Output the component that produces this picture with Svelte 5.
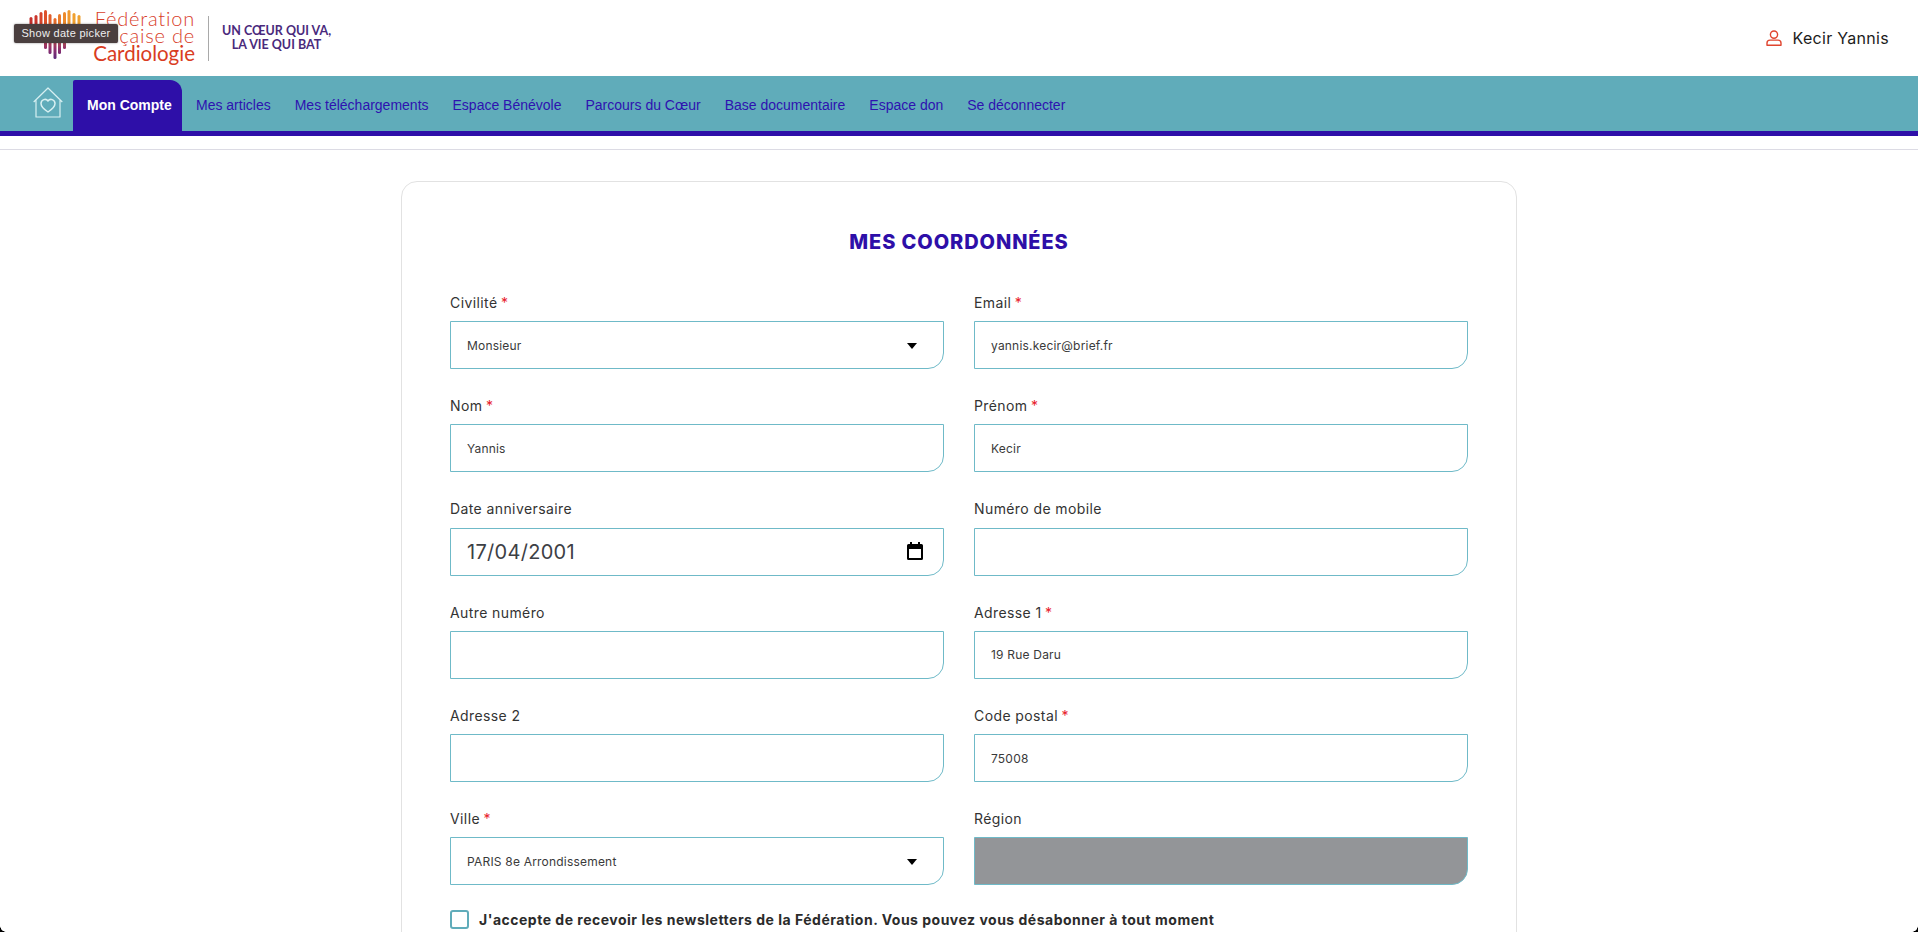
<script lang="ts">
  const navLinks = [
    'Mes articles', 'Mes téléchargements', 'Espace Bénévole', 'Parcours du Cœur',
    'Base documentaire', 'Espace don', 'Se déconnecter',
  ];

  /** Form rows, left to right. kind: text (default), select, date, disabled */
  const fields = [
    { label: 'Civilité', required: true, value: 'Monsieur', kind: 'select' },
    { label: 'Email', required: true, value: 'yannis.kecir@brief.fr' },
    { label: 'Nom', required: true, value: 'Yannis' },
    { label: 'Prénom', required: true, value: 'Kecir' },
    { label: 'Date anniversaire', value: '17/04/2001', kind: 'date' },
    { label: 'Numéro de mobile', value: '' },
    { label: 'Autre numéro', value: '' },
    { label: 'Adresse 1', required: true, value: '19 Rue Daru' },
    { label: 'Adresse 2', value: '' },
    { label: 'Code postal', required: true, value: '75008' },
    { label: 'Ville', required: true, value: 'PARIS 8e Arrondissement', kind: 'select' },
    { label: 'Région', value: '', kind: 'disabled' },
  ];

  /** Heart logo bars: x, top, bottom, top colour */
  const bars = [
    [31, 17, 30, '#c4302c'], [36, 15, 36, '#cb352b'], [41, 12, 43, '#d6432a'],
    [45.500, 10, 49, '#dd502a'], [50, 14, 54, '#e25e2a'], [55, 18, 59, '#e66c2b'],
    [59.500, 14, 54, '#e97a2b'], [64.500, 12, 49, '#ec8a2c'], [69, 10, 43, '#ef982e'],
    [74, 13, 36, '#f0a030'], [79, 15, 30, '#eea02f'],
  ] as const;
</script>

<div class="page">
  <header class="topbar">
    <div class="brand">
      <svg class="heart" width="88" height="70" viewBox="0 0 88 70" aria-hidden="true">
        <defs>
          {#each bars as b, i}
            <linearGradient id="bar{i}" x1="0" y1="10" x2="0" y2="60" gradientUnits="userSpaceOnUse">
              <stop offset="0.4" stop-color={b[3]} />
              <stop offset="0.78" stop-color="#8e2f6c" />
              <stop offset="1" stop-color="#56287f" />
            </linearGradient>
          {/each}
        </defs>
        {#each bars as b, i}
          <rect x={b[0] - 1.5} y={b[1]} width="3" height={b[2] - b[1]} rx="1.5" fill="url(#bar{i})" />
        {/each}
      </svg>
      <div class="brand-name">
        <span>Fédération</span>
        <span>Française de</span>
        <span class="strong">Cardiologie</span>
      </div>
      <div class="brand-rule"></div>
      <div class="brand-tag">UN CŒUR QUI VA,<br />LA VIE QUI BAT</div>
    </div>
    <div class="user">
      <svg width="16" height="16" viewBox="0 0 16 16" fill="none" stroke="#e0452f" stroke-width="1.4" aria-hidden="true">
        <circle cx="8" cy="4.600" r="3.600" />
        <path d="M1 15.200v-2.100c0-1.700 1.300-3 3-3h8c1.700 0 3 1.300 3 3v2.100z" stroke-linejoin="round" />
      </svg>
      <span>Kecir Yannis</span>
    </div>
  </header>

  <div class="tooltip">Show date picker</div>

  <nav class="menu">
    <a class="home" href="#home" aria-label="Accueil">
      <svg width="31" height="31" viewBox="0 0 31 31" fill="none" stroke="#d8f0f2" stroke-width="1.200" stroke-linejoin="round" aria-hidden="true">
        <path d="M.7 15 15 1l14.300 14M3 13v17h24V13" />
        <path d="M15 25c-3-2-7-5-7-8.500 0-4 5-5.500 7-2.500 2-3 7-1.500 7 2.500 0 3.500-4 6.500-7 8.500z" stroke-width="1.500" />
      </svg>
    </a>
    <a class="tab" href="#compte">Mon Compte</a>
    {#each navLinks as link}
      <a class="link" href="#lien">{link}</a>
    {/each}
  </nav>

  <div class="rule"></div>

  <main class="card">
    <h2>MES COORDONNÉES</h2>
    <form class="grid">
      {#each fields as f}
        <div class="field">
          <label for={f.label}>{f.label}{#if f.required}<span class="req">*</span>{/if}</label>
          <div class="control">
            {#if f.kind === 'select'}
              <select id={f.label}><option>{f.value}</option></select>
              <span class="caret"></span>
            {:else if f.kind === 'date'}
              <input id={f.label} class="date" type="text" value={f.value} />
              <svg class="calendar" width="18" height="18" viewBox="0 0 18 18" aria-hidden="true">
                <path d="M4 0h2v2h6V0h2v2h1.500A1.500 1.500 0 0 1 17 3.500V16.500A1.500 1.500 0 0 1 15.500 18h-13A1.500 1.500 0 0 1 1 16.500V3.500A1.500 1.500 0 0 1 2.500 2H4zM3 7v9h12V7z" fill="#000" />
              </svg>
            {:else}
              <input id={f.label} type="text" value={f.value} disabled={f.kind === 'disabled'} />
            {/if}
          </div>
        </div>
      {/each}
    </form>
    <label class="consent">
      <input type="checkbox" />
      <span>J'accepte de recevoir les newsletters de la Fédération. Vous pouvez vous désabonner à tout moment</span>
    </label>
  </main>

  <span class="corner left"></span>
  <span class="corner right"></span>
</div>

<style>
  :global(body) {
    margin: 0;
    background: #fff;
  }

  .page {
    position: relative;
    height: 932px;
    overflow: hidden;
    font-family: Inter, 'Liberation Sans', sans-serif;
    color: #2b2b2b;
  }

  .topbar {
    height: 76px;
    display: flex;
    justify-content: space-between;
    align-items: center;
    padding-right: 29px;
  }

  .brand {
    display: flex;
    align-items: center;
    height: 76px;
  }

  .heart {
    flex: none;
    margin-bottom: 6px;
  }

  .brand-name {
    width: 102px;
    margin: -4px 0 0 5px;
    display: flex;
    flex-direction: column;
    align-items: flex-end;
    font-family: Lato, sans-serif;
    font-weight: 300;
    font-size: 20px;
    line-height: 17.400px;
    letter-spacing: 0.8px;
    color: #d8402a;
    white-space: nowrap;
  }

  .brand-name .strong {
    font-size: 20.500px;
    font-weight: 400;
    letter-spacing: 0;
    color: #d93c22;
  }

  .brand-rule {
    width: 1px;
    height: 45px;
    margin: 0 13px;
    background: #a9a9a9;
  }

  .brand-tag {
    font-family: Lato, sans-serif;
    font-size: 12.500px;
    font-weight: 700;
    line-height: 14px;
    text-align: center;
    color: #4a2a7c;
    white-space: nowrap;
  }

  .user {
    display: flex;
    align-items: center;
    gap: 10px;
    font-size: 16px;
    letter-spacing: 0.3px;
    color: #1c1c1c;
  }

  .tooltip {
    position: absolute;
    left: 14px;
    top: 24px;
    height: 19px;
    width: 104px;
    text-align: center;
    font-family: 'Liberation Sans', sans-serif;
    font-size: 11px;
    line-height: 19px;
    letter-spacing: 0.3px;
    color: #eee;
    background: #4a3f3f;
    border-radius: 2px;
    box-shadow: 0 0 2px rgba(0, 0, 0, 0.5);
  }

  .menu {
    height: 55px;
    display: flex;
    align-items: flex-end;
    padding-left: 33px;
    background: #60acba;
    border-bottom: 5px solid #2e0fa8;
    font-family: 'Liberation Sans', sans-serif;
    font-size: 14px;
  }

  .menu a {
    text-decoration: none;
  }

  .home {
    display: flex;
    width: 40px;
    height: 44px;
    align-items: flex-start;
  }

  .tab {
    width: 109px;
    height: 51px;
    box-sizing: border-box;
    padding-left: 14px;
    line-height: 51px;
    font-weight: 700;
    color: #fff;
    background: #2e0fa8;
    border-top-right-radius: 12px;
    border-top-left-radius: 2px;
  }

  .link {
    padding: 0 12px;
    line-height: 51px;
    color: #2e12b0;
  }

  .tab + .link {
    padding-left: 14px;
  }

  .rule {
    height: 1px;
    margin-top: 13px;
    background: #dcdbe4;
  }

  .card {
    width: 1116px;
    box-sizing: border-box;
    margin: 31px auto 0;
    padding: 47px 48px 60px;
    background: #fff;
    border: 1px solid #e2e2e2;
    border-radius: 16px;
  }

  h2 {
    margin: 0 0 37px;
    font-size: 20px;
    line-height: 26px;
    font-weight: 800;
    letter-spacing: 0.9px;
    text-align: center;
    color: #2e0fa8;
  }

  .grid {
    display: grid;
    grid-template-columns: 1fr 1fr;
    column-gap: 30px;
    row-gap: 26px;
  }

  label {
    display: block;
    margin-bottom: 8px;
    font-size: 14px;
    line-height: 21.200px;
    letter-spacing: 0.4px;
    color: #333;
  }

  .req {
    margin-left: 3.500px;
    color: #e8202a;
  }

  .control {
    position: relative;
  }

  input[type='text'],
  select {
    display: block;
    width: 100%;
    height: 48px;
    box-sizing: border-box;
    margin: 0;
    padding: 0 16px;
    font-family: inherit;
    font-size: 12px;
    letter-spacing: 0.2px;
    color: #3a3a3a;
    background: #fff;
    border: 1px solid #6fbac8;
    border-radius: 0 0 16px 0;
    outline: none;
    appearance: none;
  }

  input.date {
    font-size: 20px;
    font-weight: 400;
    letter-spacing: 0.3px;
    color: #3d4045;
  }

  input:disabled {
    background: #939598;
  }

  .caret {
    position: absolute;
    right: 27px;
    top: 22px;
    border-left: 5px solid transparent;
    border-right: 5px solid transparent;
    border-top: 6px solid #000;
  }

  .calendar {
    position: absolute;
    right: 20px;
    top: 14px;
  }

  .consent {
    display: flex;
    align-items: center;
    gap: 10px;
    margin: 24px 0 0;
    font-size: 14px;
    font-weight: 700;
    letter-spacing: 0.5px;
    color: #2b2b2b;
  }

  .consent input {
    flex: none;
    width: 19px;
    height: 19px;
    margin: 0;
    appearance: none;
    background: #fff;
    border: 2px solid #60acba;
    border-radius: 3px;
  }

  .corner {
    position: absolute;
    bottom: 0;
    width: 6px;
    height: 6px;
  }

  .corner.left {
    left: 0;
    background: radial-gradient(circle at 100% 0, transparent 5.500px, #000 6px);
  }

  .corner.right {
    right: 0;
    background: radial-gradient(circle at 0 0, transparent 5.500px, #000 6px);
  }
</style>
